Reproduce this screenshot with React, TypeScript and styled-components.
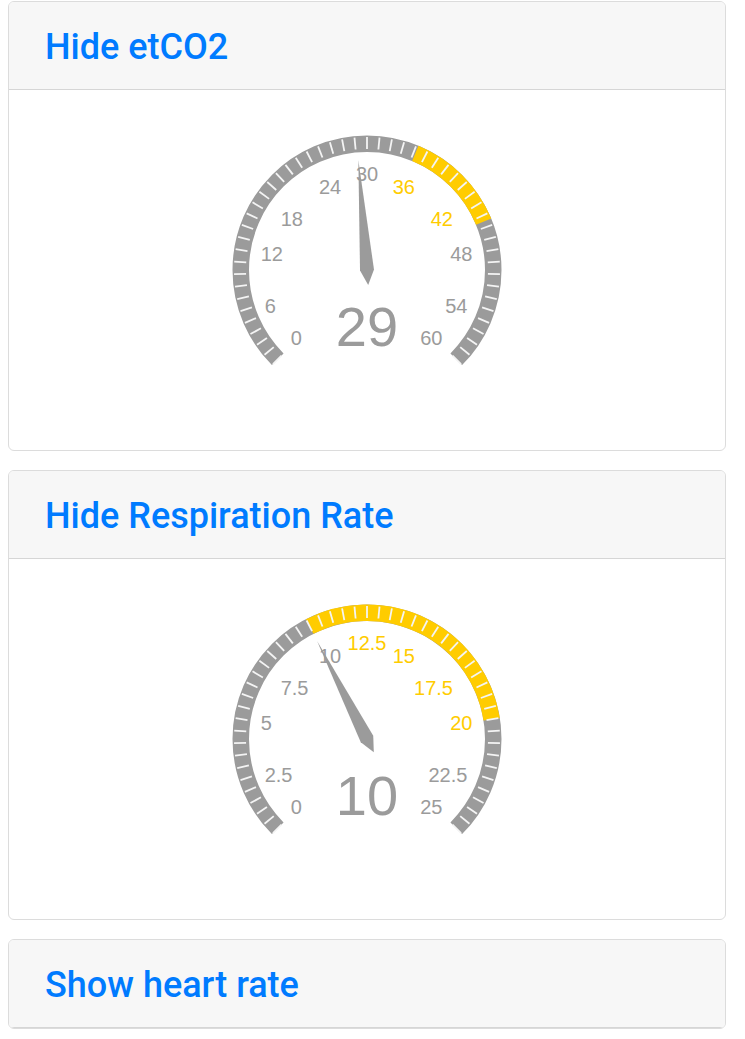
import React from "react";
import styled, { createGlobalStyle } from "styled-components";

const GlobalStyle = createGlobalStyle`
  html, body { margin: 0; padding: 0; background: #ffffff; }
  body { font-family: Roboto, "Liberation Sans", sans-serif; }
`;

const Page = styled.div`
  display: flex;
  flex-direction: column;
  gap: 19px;
  padding: 1px 19px 0 8px;
`;

const Card = styled.section`
  display: flex;
  flex-direction: column;
  border: 1px solid #dcdcdc;
  border-radius: 6px;
  background: #ffffff;
  overflow: hidden;
`;

const CardHeader = styled.div`
  display: flex;
  align-items: center;
  height: 87px;
  padding: 0 36px;
  background: #f7f7f7;
  border-bottom: 1px solid #d6d6d6;
`;

const HeaderLink = styled.a`
  font-family: Roboto, "Liberation Sans", sans-serif;
  font-size: 36px;
  font-weight: 500;
  color: #007bff;
  text-decoration: none;
  cursor: pointer;
  padding-top: 2px;
`;

const CardBody = styled.div`
  display: flex;
  justify-content: center;
  padding: 30px 0;
`;

const GaugeSvg = styled.svg`
  display: block;
  width: 300px;
  height: 300px;
`;

const GRAY = "#9b9b9b";
const YELLOW = "#ffcc00";
const CX = 150;
const CY = 150;

const LABEL_POS: { dx: number; dy: number; anchor: "start" | "middle" | "end" }[] = [
  { dx: -76.3, dy: 68, anchor: "start" },
  { dx: -102.3, dy: 36, anchor: "start" },
  { dx: -106.3, dy: -15.7, anchor: "start" },
  { dx: -86.3, dy: -51.5, anchor: "start" },
  { dx: -48, dy: -83.5, anchor: "start" },
  { dx: 0, dy: -95.7, anchor: "middle" },
  { dx: 48, dy: -83.5, anchor: "end" },
  { dx: 86, dy: -51.5, anchor: "end" },
  { dx: 105.4, dy: -15.7, anchor: "end" },
  { dx: 100.4, dy: 36, anchor: "end" },
  { dx: 75.4, dy: 68, anchor: "end" },
];

const pt = (r: number, deg: number) => {
  const a = (deg * Math.PI) / 180;
  return { x: CX + r * Math.sin(a), y: CY - r * Math.cos(a) };
};

const arcPath = (r: number, a0: number, a1: number) => {
  const p0 = pt(r, a0);
  const p1 = pt(r, a1);
  const large = a1 - a0 > 180 ? 1 : 0;
  return `M ${p0.x} ${p0.y} A ${r} ${r} 0 ${large} 1 ${p1.x} ${p1.y}`;
};

type GaugeProps = {
  min: number;
  max: number;
  step: number;
  lo: number;
  hi: number;
  value: number;
};

const Gauge: React.FC<GaugeProps> = ({ min, max, step, lo, hi, value }) => {
  const toAngle = (v: number) => -135 + ((v - min) / (max - min)) * 270;
  const labels = Array.from({ length: 11 }, (_, i) => min + i * step);
  const ticks = Array.from({ length: 51 }, (_, i) => -135 + i * 5.4);
  const needleAngle = toAngle(value);
  return (
    <GaugeSvg viewBox="0 0 300 300">
      <path d={arcPath(126.25, -135, 135)} stroke={GRAY} strokeWidth={16.5} fill="none" />
      <path d={arcPath(126.25, toAngle(lo), toAngle(hi))} stroke={YELLOW} strokeWidth={16.5} fill="none" />
      {ticks.map((a, i) => {
        const p0 = pt(121, a);
        const p1 = pt(133, a);
        return <line key={i} x1={p0.x} y1={p0.y} x2={p1.x} y2={p1.y} stroke="#f4f4f4" strokeWidth={1.8} />;
      })}
      {labels.map((v, i) => {
        const pos = LABEL_POS[i];
        const yellow = v > lo && v <= hi;
        return (
          <text
            key={i}
            x={CX + pos.dx}
            y={CY + pos.dy}
            textAnchor={pos.anchor}
            dominantBaseline="central"
            fontFamily='"Liberation Sans", Arial, sans-serif'
            fontSize={20}
            fill={yellow ? YELLOW : GRAY}
          >
            {String(v)}
          </text>
        );
      })}
      <text
        x={CX}
        y={CY + 76}
        textAnchor="middle"
        fontFamily='"Liberation Sans", Arial, sans-serif'
        fontSize={56}
        fill={GRAY}
      >
        {value}
      </text>
      <polygon
        points="0,-110 -7,0 0,15 7,0"
        fill={GRAY}
        transform={`translate(${CX} ${CY}) rotate(${needleAngle})`}
      />
    </GaugeSvg>
  );
};

export default function App() {
  return (
    <>
      <GlobalStyle />
      <Page>
        <Card>
          <CardHeader>
            <HeaderLink>Hide etCO2</HeaderLink>
          </CardHeader>
          <CardBody>
            <Gauge min={0} max={60} step={6} lo={35} hi={45} value={29} />
          </CardBody>
        </Card>
        <Card>
          <CardHeader>
            <HeaderLink>Hide Respiration Rate</HeaderLink>
          </CardHeader>
          <CardBody>
            <Gauge min={0} max={25} step={2.5} lo={10} hi={20} value={10} />
          </CardBody>
        </Card>
        <Card>
          <CardHeader>
            <HeaderLink>Show heart rate</HeaderLink>
          </CardHeader>
        </Card>
      </Page>
    </>
  );
}
